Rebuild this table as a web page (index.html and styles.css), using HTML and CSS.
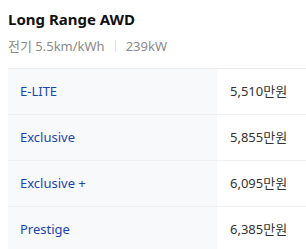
FILE: index.html
```html
<!DOCTYPE html>
<html lang="ko">
<head>
<meta charset="utf-8">
<link rel="stylesheet" href="styles.css">
</head>
<body>
<div class="trim">
  <h2 class="trim-title">Long Range AWD</h2>
  <div class="trim-spec">
    <span>전기 5.5km/kWh</span>
    <span class="sep"></span>
    <span>239kW</span>
  </div>
  <div class="grade-table">
    <div class="row">
      <div class="name">E-LITE</div>
      <div class="price">5,510만원</div>
    </div>
    <div class="row">
      <div class="name">Exclusive</div>
      <div class="price">5,855만원</div>
    </div>
    <div class="row">
      <div class="name">Exclusive +</div>
      <div class="price">6,095만원</div>
    </div>
    <div class="row">
      <div class="name">Prestige</div>
      <div class="price">6,385만원</div>
    </div>
  </div>
</div>
</body>
</html>
```
FILE: styles.css
```css
html, body {
  margin: 0;
  padding: 0;
  background: #ffffff;
}
body {
  font-family: "Noto Sans", "Noto Sans CJK KR", sans-serif;
  overflow: hidden;
}
.trim {
  padding: 8px 0 0 8px;
}
.trim-title {
  margin: 0;
  font-size: 15px;
  font-weight: 700;
  line-height: 22px;
  color: #111111;
}
.trim-spec {
  display: flex;
  align-items: center;
  margin-top: 7px;
  font-size: 13px;
  line-height: 18px;
  color: #8a8a8a;
}
.sep {
  width: 1px;
  height: 12px;
  background: #e2e2e2;
  margin: 0 10px;
}
.grade-table {
  margin-top: 13px;
  border-top: 1px solid #e9ebee;
  width: 306px;
}
.row {
  display: grid;
  grid-template-columns: 209px 1fr;
  height: 45px;
  border-bottom: 1px solid #eef0f2;
  font-size: 13px;
}
.name {
  background: #f8f9fb;
  color: #1a45b3;
  padding-left: 12px;
  padding-bottom: 2px;
  display: flex;
  align-items: center;
}
.price {
  color: #333333;
  padding-left: 13px;
  padding-bottom: 2px;
  display: flex;
  align-items: center;
}
```
